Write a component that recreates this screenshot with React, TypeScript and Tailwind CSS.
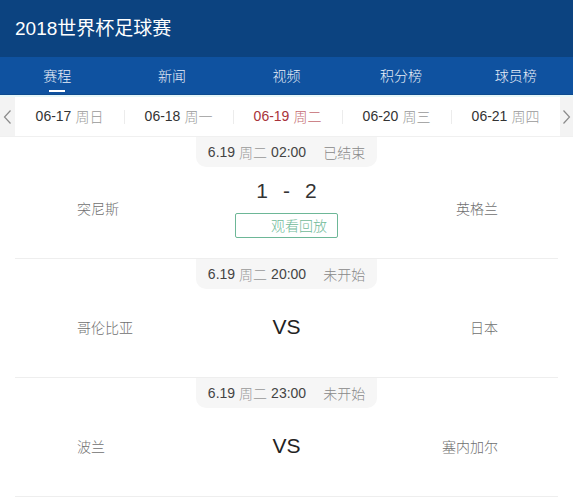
import React from "react";

const sans = { fontFamily: '"Liberation Sans", "Noto Sans CJK SC", sans-serif' };
const cjk = { fontFamily: '"Noto Sans CJK SC", "Liberation Sans", sans-serif' };

const tabs = ["赛程", "新闻", "视频", "积分榜", "球员榜"];
const dates = [
  { d: "06-17", w: "周日" },
  { d: "06-18", w: "周一" },
  { d: "06-19", w: "周二", active: true },
  { d: "06-20", w: "周三" },
  { d: "06-21", w: "周四" },
];

type Match = {
  time: string;
  status: string;
  home: string;
  away: string;
  score?: [string, string];
};

const matches: Match[] = [
  { time: "02:00", status: "已结束", home: "突尼斯", away: "英格兰", score: ["1", "2"] },
  { time: "20:00", status: "未开始", home: "哥伦比亚", away: "日本" },
  { time: "23:00", status: "未开始", home: "波兰", away: "塞内加尔" },
];

function MatchBlock({ m }: { m: Match }) {
  return (
    <div className="flex flex-col">
      <div className="flex justify-center">
        <div className="h-[30px] w-[181px] rounded-b-[10px] bg-[#f6f6f6] flex items-center justify-center text-[14px]">
          <span className="text-[#444]" style={sans}>6.19</span>
          <span className="ml-[4px] text-[#999] font-light" style={cjk}>周二</span>
          <span className="ml-[4px] text-[#444]" style={sans}>{m.time}</span>
          <span className="ml-[17px] text-[#888] font-light" style={cjk}>{m.status}</span>
        </div>
      </div>
      <div
        className={`grid grid-cols-[1fr_auto_1fr] items-center ${m.score ? "h-[91px] pb-[9px]" : "h-[88px] pb-[12px]"}`}
      >
        <div className="pl-[77px] text-left text-[14px] text-[#707070] font-light" style={cjk}>
          {m.home}
        </div>
        <div className="flex flex-col items-center">
          {m.score ? (
            <>
              <div className="flex gap-[15px] text-[21px] leading-[24px] text-[#333]" style={sans}>
                <span>{m.score[0]}</span>
                <span>-</span>
                <span>{m.score[1]}</span>
              </div>
              <div
                className="mt-[10px] h-[25px] w-[103px] border border-[#6db797] rounded-[2px] flex items-center pl-[35px] text-[14px] text-[#6fba98] font-light"
                style={cjk}
              >
                观看回放
              </div>
            </>
          ) : (
            <div className="text-[21px] leading-[24px] text-[#222]" style={sans}>
              VS
            </div>
          )}
        </div>
        <div className="pr-[75px] text-right text-[14px] text-[#707070] font-light" style={cjk}>
          {m.away}
        </div>
      </div>
      <div className="mx-[15px] h-px bg-[#eeeeee]" />
    </div>
  );
}

export default function App() {
  return (
    <div className="w-[573px] h-[500px] bg-white overflow-hidden" style={sans}>
      <div className="h-[57px] bg-[#0c4380] flex items-center pl-[15px]">
        <span className="text-white text-[19px] leading-none" style={sans}>
          2018世界杯足球赛
        </span>
      </div>
      <div className="h-[38px] bg-[#0f52a0] grid grid-cols-5 border-b border-[#0d4a8f]">
        {tabs.map((t, i) => (
          <div key={t} className="relative flex items-center justify-center text-[14px] text-[#e8eef8] font-light" style={cjk}>
            {t}
            {i === 0 && (
              <div className="absolute bottom-[2px] left-1/2 -translate-x-1/2 w-[16px] h-[2px] bg-white" />
            )}
          </div>
        ))}
      </div>
      <div className="h-[42px] flex bg-[#f3f3f3] border-t-2 border-[#e6f7f9] border-b border-b-[#f0f0f0]">
        <div className="w-[15px] flex items-center justify-center text-[#888]">
          <svg width="9" height="16" viewBox="0 0 9 16" fill="none">
            <path d="M7.5 1.5L1.5 8l6 6.5" stroke="#8a8a8a" strokeWidth="1.2" />
          </svg>
        </div>
        <div className="flex-1 bg-white flex">
          {dates.map((d, i) => (
            <div key={d.d} className="flex-1 relative flex items-center justify-center text-[14px]">
              {i > 0 && <div className="absolute left-0 top-1/2 -translate-y-1/2 w-px h-[14px] bg-[#ececec]" />}
              <span className={d.active ? "text-[#a8333a]" : "text-[#333]"} style={sans}>
                {d.d}
              </span>
              <span className={`ml-[4px] font-light ${d.active ? "text-[#c46a70]" : "text-[#999]"}`} style={cjk}>
                {d.w}
              </span>
            </div>
          ))}
        </div>
        <div className="w-[13px] flex items-center justify-center">
          <svg width="9" height="16" viewBox="0 0 9 16" fill="none">
            <path d="M1.5 1.5l6 6.5-6 6.5" stroke="#8a8a8a" strokeWidth="1.2" />
          </svg>
        </div>
      </div>
      <div className="flex flex-col">
        {matches.map((m) => (
          <MatchBlock key={m.home} m={m} />
        ))}
      </div>
    </div>
  );
}
